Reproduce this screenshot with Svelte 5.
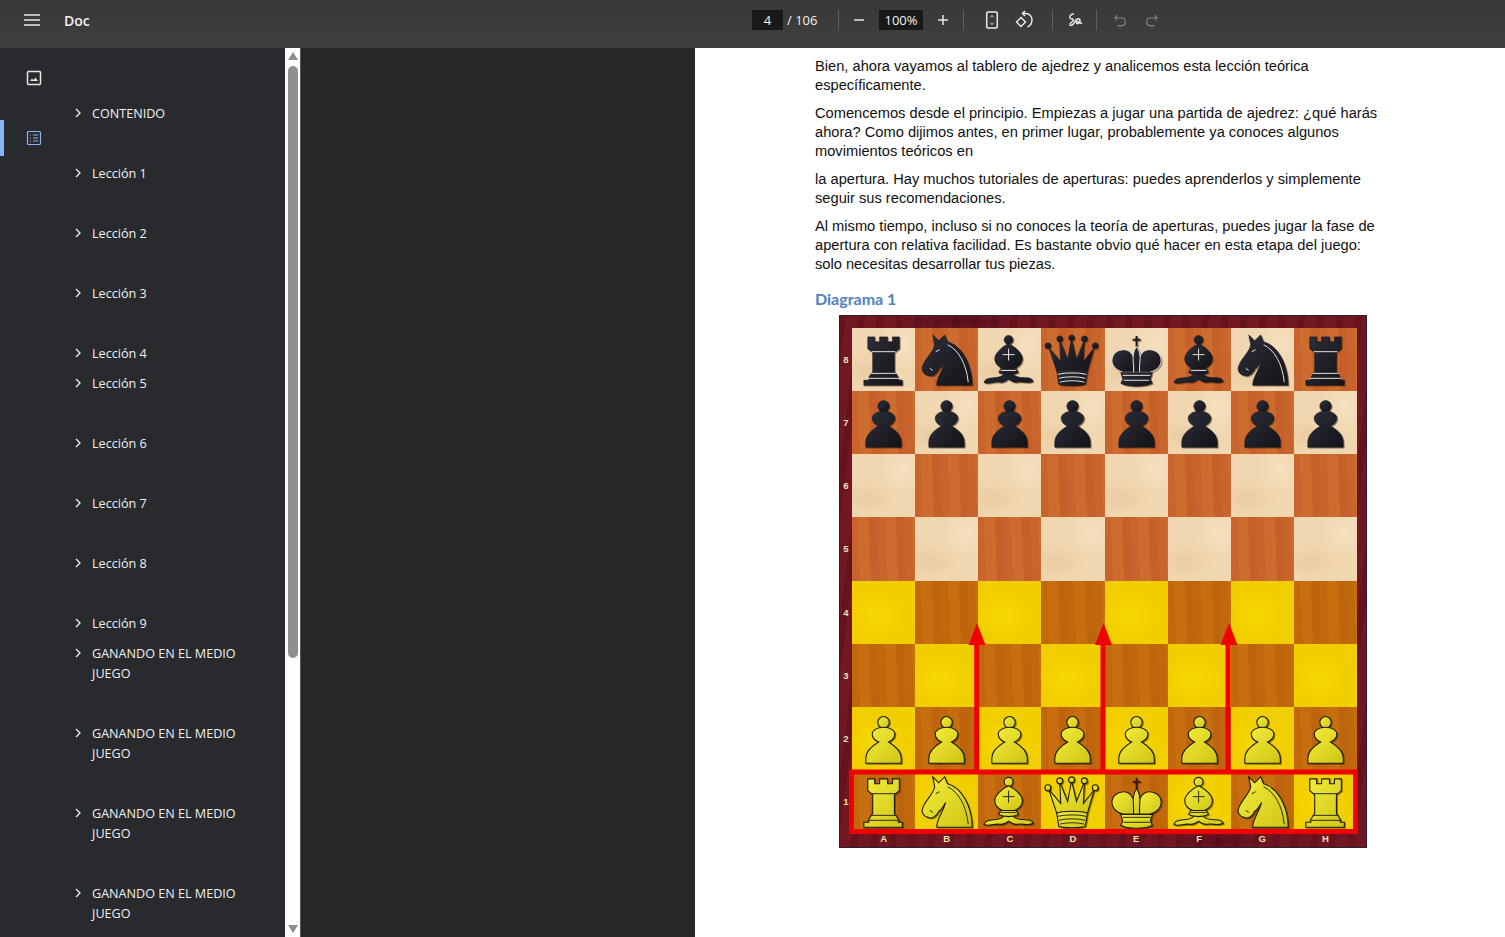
<script>
	// outline entries, gap = space under the row
	const items = [
		['CONTENIDO', 40], ['Lección 1', 40], ['Lección 2', 40], ['Lección 3', 40],
		['Lección 4', 10], ['Lección 5', 40], ['Lección 6', 40], ['Lección 7', 40],
		['Lección 8', 40], ['Lección 9', 10],
		['GANANDO EN EL MEDIO JUEGO', 40], ['GANANDO EN EL MEDIO JUEGO', 40],
		['GANANDO EN EL MEDIO JUEGO', 40], ['GANANDO EN EL MEDIO JUEGO', 40]
	];

	const back = ['r', 'n', 'b', 'q', 'k', 'b', 'n', 'r'];
	const files = ['A', 'B', 'C', 'D', 'E', 'F', 'G', 'H'];
	const ranks = [8, 7, 6, 5, 4, 3, 2, 1];

	function pieceAt(rank, file) {
		if (rank == 8) return { type: back[file], color: 'dark' };
		if (rank == 7) return { type: 'p', color: 'dark' };
		if (rank == 2) return { type: 'p', color: 'light' };
		if (rank == 1) return { type: back[file], color: 'light' };
		return null;
	}

	function squareClass(rank, file) {
		const isLight = (rank + file) % 2 == 0;
		if (rank <= 4) return isLight ? 'sq yl' : 'sq yd';
		return isLight ? 'sq wl' : 'sq wd';
	}
</script>

{#snippet piece(type, color)}
	<svg class="piece {color}" viewBox="0 0 64 64">
		{#if type == 'r'}
			<path class="bd" d="M16 9H23V14H28V9H36V14H41V9H48V21L43 25V44L47 50V53H51V58H12V53H17V50L21 44V25L16 21Z" />
			<path class="ln" d="M20 24H44M19 46H45M16 51H48" />
		{:else if type == 'n'}
			<path class="bd" d="M18 7L24 13L30 7L33 14C48 18 58 38 58 58H22C22 50 28 44 31 33C29 37 27 40 24 42C22 47 17 50 13 48C8 47 6 42 8 38C11 30 19 24 20 17Z" />
			<path class="ln" d="M33 17C44 22 52 36 54 55M15 41L18 43M21 24L25 22" />
		{:else if type == 'b'}
			<circle class="bd" cx="31" cy="12" r="4.5" />
			<path class="bd" d="M6 55C8 50 14 51 20 50C24 49 26 48 27 46H35C36 48 38 49 42 50C48 51 54 49 56 54C52 57 46 54 40 55C36 56 33 53 31 52C29 53 26 56 22 55C16 54 10 58 6 55Z" />
			<path class="bd" d="M23 41H39L41 45C36 48 26 48 21 45Z" />
			<path class="bd" d="M31 16C38 19 45 26 45 31C45 37 40 40 37 41H25C22 40 17 37 17 31C17 26 24 19 31 16Z" />
			<path class="ln" d="M31 21V33M25 27H37M23 43H39" />
		{:else if type == 'q'}
			<path class="bd" d="M16 44L8 20L20 34L19 12L27 32L31 11L36 32L44 12L43 34L54 20L47 44Z" />
			<circle class="bd" cx="7" cy="18" r="3" />
			<circle class="bd" cx="19" cy="11" r="3" />
			<circle class="bd" cx="31" cy="10" r="3" />
			<circle class="bd" cx="44" cy="11" r="3" />
			<circle class="bd" cx="55" cy="18" r="3" />
			<path class="bd" d="M16 44C20 41 43 41 47 44L45 57C40 59 23 59 18 57Z" />
			<path class="ln" d="M17 47C25 45 38 45 46 47M18 51C25 49 38 49 45 51M19 55C25 53 38 53 44 55" />
		{:else if type == 'k'}
			<path class="ln cross" d="M32 8V19M28 12H36" />
			<path class="bd lobe" d="M29 45H19C11 43 7 38 7 33C7 26 13 22 19 22C24 22 27 25 29 30Z" />
			<path class="bd lobe" d="M35 45H45C53 43 57 38 57 33C57 26 51 22 45 22C40 22 37 25 35 30Z" />
			<path class="bd lobe" d="M32 19C36 24 36 30 35 38V45H29V38C28 30 28 24 32 19Z" />
			<path class="bd" d="M16 45H48L46 52L48 56C42 60 22 60 16 56L18 52Z" />
			<path class="ln" d="M18 48H46M19 53H45" />
		{:else}
			<circle class="bd" cx="32" cy="15.500" r="5.800" />
			<path class="bd" d="M14 57V52C14 44 21 39 27 35.500C23 34 20.500 31 20.500 27.500C20.500 24 25 20.500 32 20.500C39 20.500 43.500 24 43.500 27.500C43.500 31 41 34 37 35.500C43 39 50 44 50 52V57Z" />
		{/if}
	</svg>
{/snippet}

<div class="app">
	<header class="toolbar">
		<div class="left">
			<svg class="ic menu" viewBox="0 0 16 12"><path d="M0 1H16M0 6H16M0 11H16" /></svg>
			<span class="title">Doc</span>
		</div>
		<div class="controls">
			<span class="box page-no">4</span>
			<span class="count">/ 106</span>
			<i class="sep first"></i>
			<svg class="ic small minus" viewBox="0 0 12 12"><path d="M1 6H11" /></svg>
			<span class="box zoom-val">100%</span>
			<svg class="ic small plus" viewBox="0 0 12 12"><path d="M1 6H11M6 1V11" /></svg>
			<i class="sep after-plus"></i>
			<svg class="ic fit" viewBox="0 0 16 18"><rect x="2.7" y="1" width="10.6" height="16" rx="1.2" /><path class="thin" d="M6.5 6L8 4.6L9.5 6M6.5 12L8 13.4L9.5 12" /></svg>
			<svg class="ic rotate" viewBox="0 0 20 20"><path d="M7 7.500L2.500 12L7 16.500L11.500 12Z" /><path d="M8.500 3.500H12C15.500 3.500 18 6.500 18 10C18 13 16.500 15.500 13.500 17M11 1L8.500 3.500L11 6" /></svg>
			<i class="sep after-rotate"></i>
			<svg class="ic pen" viewBox="0 0 18 18"><path d="M8 3C5 3 3 5 4 7C5 9 8 7 7 9.500C6 12 3 12 4 14C5 15 7 14 8 12C9 10 11 7 13 8C15 9 14 12 12 12.500C10 13 10 11 11 10.500C13 10 14 13 16 12" /></svg>
			<i class="sep after-pen"></i>
			<svg class="ic hist undo" viewBox="0 0 16 14"><path d="M5 1L2 4L5 7M2 4H10C12.500 4 14 6 14 8.500C14 11 12.500 13 10 13H5" /></svg>
			<svg class="ic hist redo" viewBox="0 0 16 14"><path d="M11 1L14 4L11 7M14 4H6C3.500 4 2 6 2 8.500C2 11 3.500 13 6 13H11" /></svg>
		</div>
	</header>

	<div class="body">
		<aside class="sidebar">
			<nav class="rail">
				<div class="rail-btn">
					<svg class="ic thumb" viewBox="0 0 16 16"><rect x="1.500" y="1.500" width="13" height="13" rx="1" /><path class="fill" d="M4 11L6 8.500L7.500 10L9.500 7.500L12 11Z" /></svg>
				</div>
				<div class="rail-btn active">
					<svg class="ic outline" viewBox="0 0 16 16"><rect x="1.500" y="1.500" width="13" height="13" rx="1" /><path d="M4 5H5M7 5H12M4 8H5M7 8H12M4 11H5M7 11H12" /></svg>
				</div>
			</nav>
			<ul class="tree">
				{#each items as [label, gap]}
					<li class="row" style="margin-bottom: {gap}px">
						<svg class="chev" viewBox="0 0 8 10"><path d="M2 1L6 5L2 9" /></svg>
						<span class="label">{label}</span>
					</li>
				{/each}
			</ul>
		</aside>

		<div class="scrollbar">
			<svg class="arrow" viewBox="0 0 10 8"><path d="M5 0L10 8H0Z" /></svg>
			<div class="scroll-thumb"></div>
			<div class="scroll-rest"></div>
			<svg class="arrow" viewBox="0 0 10 8"><path d="M0 0H10L5 8Z" /></svg>
		</div>

		<main class="viewer">
			<article class="sheet">
				<p>Bien, ahora vayamos al tablero de ajedrez y analicemos esta lección teórica específicamente.</p>
				<p>Comencemos desde el principio. Empiezas a jugar una partida de ajedrez: ¿qué harás ahora? Como dijimos antes, en primer lugar, probablemente ya conoces algunos movimientos teóricos en</p>
				<p>la apertura. Hay muchos tutoriales de aperturas: puedes aprenderlos y simplemente seguir sus recomendaciones.</p>
				<p>Al mismo tiempo, incluso si no conoces la teoría de aperturas, puedes jugar la fase de apertura con relativa facilidad. Es bastante obvio qué hacer en esta etapa del juego: solo necesitas desarrollar tus piezas.</p>
				<h2>Diagrama 1</h2>

				<div class="board">
					<span class="corner-top"></span>
					{#each ranks as rank}
						<span class="rank-label">{rank}</span>
						{#each files as f, i}
							{@const p = pieceAt(rank, i)}
							<div class={squareClass(rank, i)}>
								{#if p}{@render piece(p.type, p.color)}{/if}
							</div>
						{/each}
						<span></span>
					{/each}
					<span></span>
					{#each files as f}
						<span class="file-label">{f}</span>
					{/each}

					<!-- red marks drawn on top of the diagram -->
					<svg class="marks" viewBox="0 0 528 533">
						<defs>
							<linearGradient id="ivory" x1="0" y1="0" x2="1" y2="1">
								<stop offset="0" stop-color="#f4ee3c" />
								<stop offset="1" stop-color="#cfc414" />
							</linearGradient>
							<linearGradient id="ebony" x1="0" y1="0" x2="1" y2="1">
								<stop offset="0" stop-color="#2c2e3a" />
								<stop offset="1" stop-color="#131318" />
							</linearGradient>
						</defs>
						<rect x="12.500" y="457" width="504" height="59.500" fill="none" stroke="#f00000" stroke-width="5" />
						<path d="M137.700 459V326M264 459V326M389 459V326" fill="none" stroke="#f00000" stroke-width="5" />
						<path d="M138 308L146.500 330H129.500ZM264.500 308L273 330H256ZM390 308L398.500 330H381.500Z" fill="#f00000" />
					</svg>
				</div>
			</article>
		</main>
	</div>
</div>

<style>
	:global(body) {
		margin: 0;
		background: #282828;
	}
	.app {
		display: flex;
		flex-direction: column;
		height: 937px;
		overflow: hidden;
		font-family: 'Open Sans', 'Noto Sans', sans-serif;
	}
	.toolbar {
		display: flex;
		align-items: center;
		height: 48px;
		flex: none;
		box-sizing: border-box;
		padding-bottom: 8px;
		background: linear-gradient(#383838, #3f3f3f);
		color: #f1f1f1;
	}
	.left {
		display: flex;
		align-items: center;
		width: 752px;
		padding-left: 24px;
		box-sizing: border-box;
	}
	.title {
		margin-left: 24px;
		font-size: 14px;
		font-weight: 600;
	}
	.controls {
		display: flex;
		align-items: center;
		font-size: 13px;
	}
	.ic {
		display: block;
		flex: none;
		fill: none;
		stroke: #e8e8e8;
		stroke-width: 1.500;
	}
	.ic .fill {
		fill: #e8e8e8;
		stroke: none;
	}
	.ic .thin {
		stroke-width: 1;
	}
	.menu {
		width: 16px;
		height: 12px;
	}
	.box {
		display: flex;
		align-items: center;
		justify-content: center;
		height: 20px;
		background: #191919;
		color: #f1f1f1;
	}
	.page-no {
		width: 31px;
	}
	.count {
		margin-left: 4px;
		width: 31px;
		white-space: nowrap;
	}
	.sep {
		display: block;
		width: 1px;
		height: 20px;
		background: #5f5f5f;
		flex: none;
	}
	.sep.first {
		margin-left: 20px;
	}
	.small {
		width: 12px;
		height: 12px;
	}
	.minus {
		margin-left: 14px;
	}
	.zoom-val {
		width: 44px;
		margin-left: 14px;
	}
	.plus {
		margin-left: 14px;
	}
	.sep.after-plus {
		margin-left: 14px;
	}
	.fit {
		width: 16px;
		height: 18px;
		margin-left: 20px;
	}
	.rotate {
		width: 20px;
		height: 20px;
		margin-left: 14px;
	}
	.sep.after-rotate {
		margin-left: 18px;
	}
	.pen {
		width: 18px;
		height: 18px;
		margin-left: 13px;
	}
	.sep.after-pen {
		margin-left: 12px;
	}
	.hist {
		width: 14px;
		height: 13px;
		stroke: #7b7b7b;
	}
	.undo {
		margin-left: 16px;
	}
	.redo {
		margin-left: 18px;
	}

	.body {
		display: flex;
		flex: 1;
		min-height: 0;
	}
	.sidebar {
		display: flex;
		width: 285px;
		flex: none;
		background: #292a2d;
		color: #f1f1f1;
		overflow: hidden;
	}
	.rail {
		width: 68px;
		flex: none;
		padding-top: 12px;
		display: flex;
		flex-direction: column;
		gap: 24px;
	}
	.rail-btn {
		height: 36px;
		display: flex;
		align-items: center;
		justify-content: center;
		box-sizing: border-box;
	}
	.rail-btn.active {
		border-left: 4px solid #8ab4f8;
		border-radius: 0 3px 3px 0;
		padding-right: 4px;
	}
	.thumb,
	.outline {
		width: 16px;
		height: 16px;
	}
	.outline {
		stroke: #8ab4f8;
		stroke-width: 1.200;
	}
	.tree {
		list-style: none;
		margin: 0;
		padding: 56px 40px 0 0;
		flex: 1;
	}
	.row {
		display: flex;
		font-size: 12.600px;
		line-height: 20px;
	}
	.chev {
		width: 8px;
		height: 10px;
		margin: 4px 10px 0 6px;
		flex: none;
		fill: none;
		stroke: #e8e8e8;
		stroke-width: 1.400;
	}
	.scrollbar {
		width: 16px;
		flex: none;
		background: #fdfdfd;
		display: flex;
		flex-direction: column;
		align-items: center;
		padding: 4px 0;
		box-sizing: border-box;
		border-right: 1px solid #555;
	}
	.arrow {
		width: 10px;
		height: 8px;
		flex: none;
		fill: #8c8c8c;
	}
	.scroll-thumb {
		width: 10px;
		height: 592px;
		margin-top: 6px;
		background: #8f8f8f;
		border-radius: 5px;
		flex: none;
	}
	.scroll-rest {
		flex: 1;
	}
	.viewer {
		flex: 1;
		min-width: 0;
		background: #282828;
		padding-left: 394px;
	}
	.sheet {
		height: 100%;
		background: #fff;
		box-sizing: border-box;
		padding: 9px 120px 0;
		color: #111;
		font-family: 'Liberation Sans', Arial, sans-serif;
		font-size: 14.670px;
		line-height: 19px;
	}
	.sheet p {
		margin: 0 0 9px;
	}
	.sheet h2 {
		margin: 15px 0 7px;
		font-family: Lato, 'Open Sans', sans-serif;
		font-size: 16px;
		line-height: 19px;
		font-weight: 700;
		color: #4f81bd;
	}
	.board {
		position: relative;
		width: 528px;
		height: 533px;
		margin-left: 24px;
		display: grid;
		grid-template-columns: 13px repeat(8, 1fr) 10px;
		grid-template-rows: 13px repeat(8, 1fr) 15px;
		box-sizing: border-box;
		background:
			radial-gradient(ellipse 60px 10px at 120px 6px, rgba(30, 0, 10, 0.3), transparent),
			radial-gradient(ellipse 50px 8px at 380px 526px, rgba(30, 0, 10, 0.3), transparent),
			repeating-linear-gradient(97deg, rgba(40, 0, 10, 0.14) 0 7px, rgba(140, 30, 50, 0.06) 7px 19px),
			#701622;
		box-shadow: inset 0 0 0 1px #2c2030;
	}
	.corner-top {
		grid-column: 1 / -1;
	}
	.rank-label {
		display: flex;
		align-items: center;
		justify-content: center;
		padding-left: 1px;
		font-family: 'Liberation Sans', sans-serif;
		font-size: 9.500px;
		font-weight: 700;
		color: #f0e2a8;
	}
	.file-label {
		text-align: center;
		font-family: 'Liberation Sans', sans-serif;
		font-size: 9.500px;
		line-height: 12px;
		font-weight: 700;
		color: #f0e2a8;
	}
	.sq {
		display: flex;
		min-width: 0;
		min-height: 0;
	}
	.wl {
		background:
			radial-gradient(ellipse 30px 18px at 25% 70%, rgba(214, 170, 120, 0.25), transparent),
			radial-gradient(ellipse 22px 26px at 80% 25%, rgba(250, 232, 205, 0.5), transparent),
			#f1d7b1;
	}
	.wd {
		background: repeating-linear-gradient(88deg, #c9652c 0 8px, #cd6c2f 8px 19px, #c6602a 19px 27px);
	}
	.yl {
		background: radial-gradient(ellipse 30px 24px at 40% 55%, #f6d800, #f1ce00);
	}
	.yd {
		background: repeating-linear-gradient(88deg, #c2680c 0 8px, #c76f0e 8px 19px, #bd640c 19px 27px);
	}
	.piece {
		width: 100%;
		height: 100%;
		display: block;
		filter: drop-shadow(1px 1px 0.600px rgba(40, 20, 0, 0.45));
	}
	.dark .bd {
		fill: url(#ebony);
		stroke: #16161c;
		stroke-width: 0.600;
	}
	.dark .lobe {
		stroke: #e8e4d8;
		stroke-width: 1;
	}
	.dark .ln {
		fill: none;
		stroke: #ece8dc;
		stroke-width: 1;
	}
	.dark .cross {
		stroke: #1c1c22;
		stroke-width: 2;
	}
	.light .bd {
		fill: url(#ivory);
		stroke: #1c1c10;
		stroke-width: 1.100;
	}
	.light .ln {
		fill: none;
		stroke: #2a2a12;
		stroke-width: 1;
	}
	.light .cross {
		stroke: #3a1408;
		stroke-width: 1.800;
	}
	.marks {
		position: absolute;
		left: 0;
		top: 0;
		width: 528px;
		height: 533px;
		pointer-events: none;
	}
</style>
